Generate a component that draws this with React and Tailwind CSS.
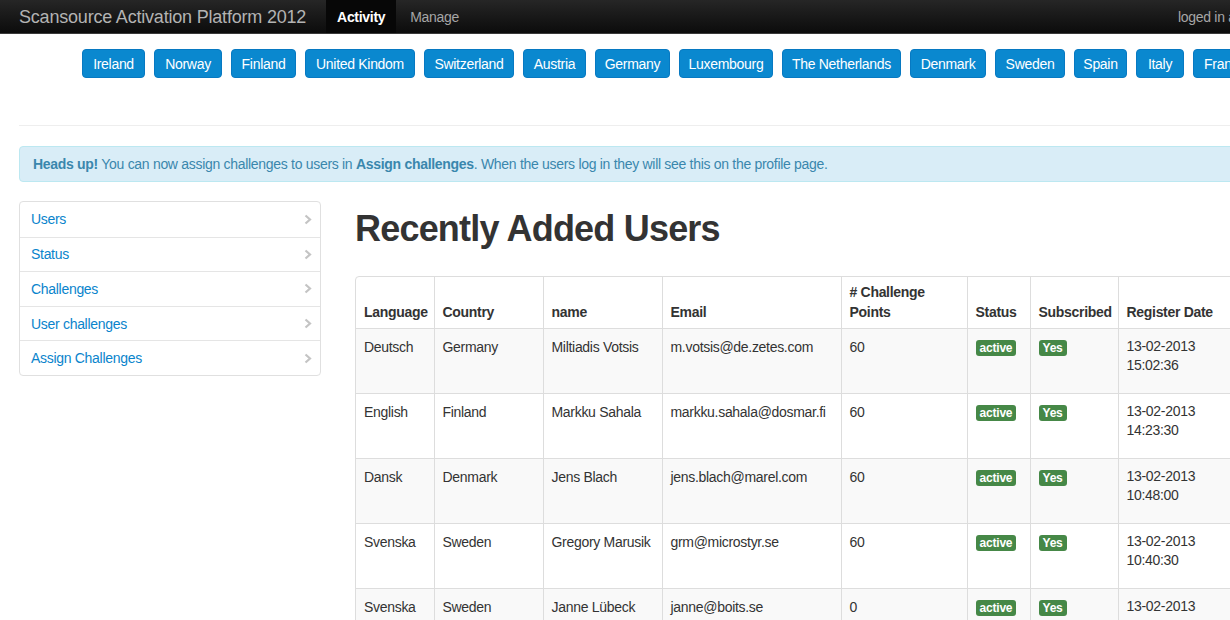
import React from "react";

const countries = [
  ["Ireland", "w-[63px]"],
  ["Norway", "w-[68px]"],
  ["Finland", "w-[65px]"],
  ["United Kindom", "w-[110px]"],
  ["Switzerland", "w-[90px]"],
  ["Austria", "w-[63px]"],
  ["Germany", "w-[75px]"],
  ["Luxembourg", "w-[94px]"],
  ["The Netherlands", "w-[119px]"],
  ["Denmark", "w-[76px]"],
  ["Sweden", "w-[70px]"],
  ["Spain", "w-[53px]"],
  ["Italy", "w-[48px]"],
  ["France", "w-[64px]"],
];

const menu = ["Users", "Status", "Challenges", "User challenges", "Assign Challenges"];

const rows = [
  ["Deutsch", "Germany", "Miltiadis Votsis", "m.votsis@de.zetes.com", "60", "13-02-2013", "15:02:36"],
  ["English", "Finland", "Markku Sahala", "markku.sahala@dosmar.fi", "60", "13-02-2013", "14:23:30"],
  ["Dansk", "Denmark", "Jens Blach", "jens.blach@marel.com", "60", "13-02-2013", "10:48:00"],
  ["Svenska", "Sweden", "Gregory Marusik", "grm@microstyr.se", "60", "13-02-2013", "10:40:30"],
  ["Svenska", "Sweden", "Janne Lübeck", "janne@boits.se", "0", "13-02-2013", "09:21:11"],
];

function Chevron() {
  return (
    <svg width="8" height="11" viewBox="0 0 8 11" className="shrink-0">
      <path d="M1.5 1.5 L6 5.5 L1.5 9.5" fill="none" stroke="#c4c4c4" strokeWidth="2.2" />
    </svg>
  );
}

function Badge({ children }) {
  return (
    <span className="inline-block rounded-[3px] bg-[#468847] px-[4px] py-[1px] text-[12px] font-bold leading-[14px] tracking-[-0.2px] text-white">
      {children}
    </span>
  );
}

export default function App() {
  const td = "border-l border-[#dddddd] px-2 py-2 align-top whitespace-nowrap first:border-l-0";
  return (
    <div className="h-[620px] w-[1230px] overflow-hidden bg-white font-['Liberation_Sans',Arial,sans-serif] text-[14px] leading-[20px] tracking-[-0.3px] text-[#333333]">
      {/* navbar */}
      <div className="flex h-[34px] w-[1230px] items-stretch border-b border-[#3a3a3a] bg-gradient-to-b from-[#262626] to-[#0c0c0c]">
        <div className="flex items-center pl-[19px] pr-[20px] text-[18px] font-light tracking-[-0.2px] text-[#b3b3b3]">
          Scansource Activation Platform 2012
        </div>
        <div className="flex w-[70px] items-center justify-center bg-[#070707] text-[14px] font-bold text-white">
          Activity
        </div>
        <div className="flex items-center px-[14px] text-[14px] text-[#a6a6a6]">Manage</div>
        <div className="ml-auto flex w-[52px] shrink-0 items-center whitespace-nowrap text-[14px] text-[#a6a6a6]">
          loged in as admin
        </div>
      </div>

      {/* country buttons */}
      <div className="flex w-[1400px] gap-[9px] pl-[82px] pt-[15px]">
        {countries.map(([c, w]) => (
          <div
            key={c}
            className={`${w} flex h-[29px] shrink-0 items-center justify-center rounded-[4px] border border-[#0779c2] bg-[#0a88cf] text-[14px] text-white`}
          >
            {c}
          </div>
        ))}
      </div>

      <div className="pl-[19px]">
        <div className="mt-[47px] h-px w-[1300px] bg-[#eeeeee]" />

        {/* alert */}
        <div className="mt-[20px] flex h-[36px] w-[1300px] items-center rounded-[4px] border border-[#bce8f1] bg-[#d9edf7] pl-[13px] text-[14px] text-[#3a87ad]">
          <span>
            <b>Heads up!</b> You can now assign challenges to users in <b>Assign challenges</b>. When the users log in
            they will see this on the profile page.
          </span>
        </div>

        <div className="mt-[19px] flex gap-[34px]">
          {/* sidebar */}
          <div className="w-[302px] shrink-0">
            <div className="overflow-hidden rounded-[4px] border border-[#e0e0e0] bg-white">
              {menu.map((m, i) => (
                <div
                  key={m}
                  className={`flex h-[34.6px] items-center justify-between pl-[11px] pr-[8px] text-[14px] text-[#0a84cc] ${
                    i > 0 ? "border-t border-[#e5e5e5]" : ""
                  }`}
                >
                  <span>{m}</span>
                  <Chevron />
                </div>
              ))}
            </div>
          </div>

          {/* main */}
          <div className="w-[900px] shrink-0">
            <h1 className="mt-[8px] text-[36px] font-bold leading-[40px] tracking-[-0.8px] text-[#333333]">
              Recently Added Users
            </h1>
            <div className="mt-[27px] w-[900px] overflow-hidden rounded-tl-[4px] border border-[#dddddd]">
              <table className="w-full table-fixed border-collapse text-left">
                <colgroup>
                  <col className="w-[78px]" />
                  <col className="w-[109px]" />
                  <col className="w-[119px]" />
                  <col className="w-[179px]" />
                  <col className="w-[126px]" />
                  <col className="w-[63px]" />
                  <col className="w-[88px]" />
                  <col />
                </colgroup>
                <thead>
                  <tr className="h-[51px]">
                    {["Language", "Country", "name", "Email", "# Challenge Points", "Status", "Subscribed", "Register Date"].map(
                      (h) => (
                        <th
                          key={h}
                          className="whitespace-nowrap border-l border-[#dddddd] px-2 pb-[6px] pt-[5px] align-bottom font-bold first:border-l-0"
                        >
                          {h === "# Challenge Points" ? (
                            <>
                              # Challenge
                              <br />
                              Points
                            </>
                          ) : (
                            h
                          )}
                        </th>
                      )
                    )}
                  </tr>
                </thead>
                <tbody>
                  {rows.map((r, i) => (
                    <tr key={i} className={`h-[65px] border-t border-[#dddddd] ${i % 2 === 0 ? "bg-[#f9f9f9]" : "bg-white"}`}>
                      <td className={td}>{r[0]}</td>
                      <td className={td}>{r[1]}</td>
                      <td className={td}>{r[2]}</td>
                      <td className={td}>{r[3]}</td>
                      <td className={td}>{r[4]}</td>
                      <td className={td}>
                        <Badge>active</Badge>
                      </td>
                      <td className={td}>
                        <Badge>Yes</Badge>
                      </td>
                      <td className={`${td} leading-[19px]`}>
                        {r[5]}
                        <br />
                        {r[6]}
                      </td>
                    </tr>
                  ))}
                </tbody>
              </table>
            </div>
          </div>
        </div>
      </div>
    </div>
  );
}
